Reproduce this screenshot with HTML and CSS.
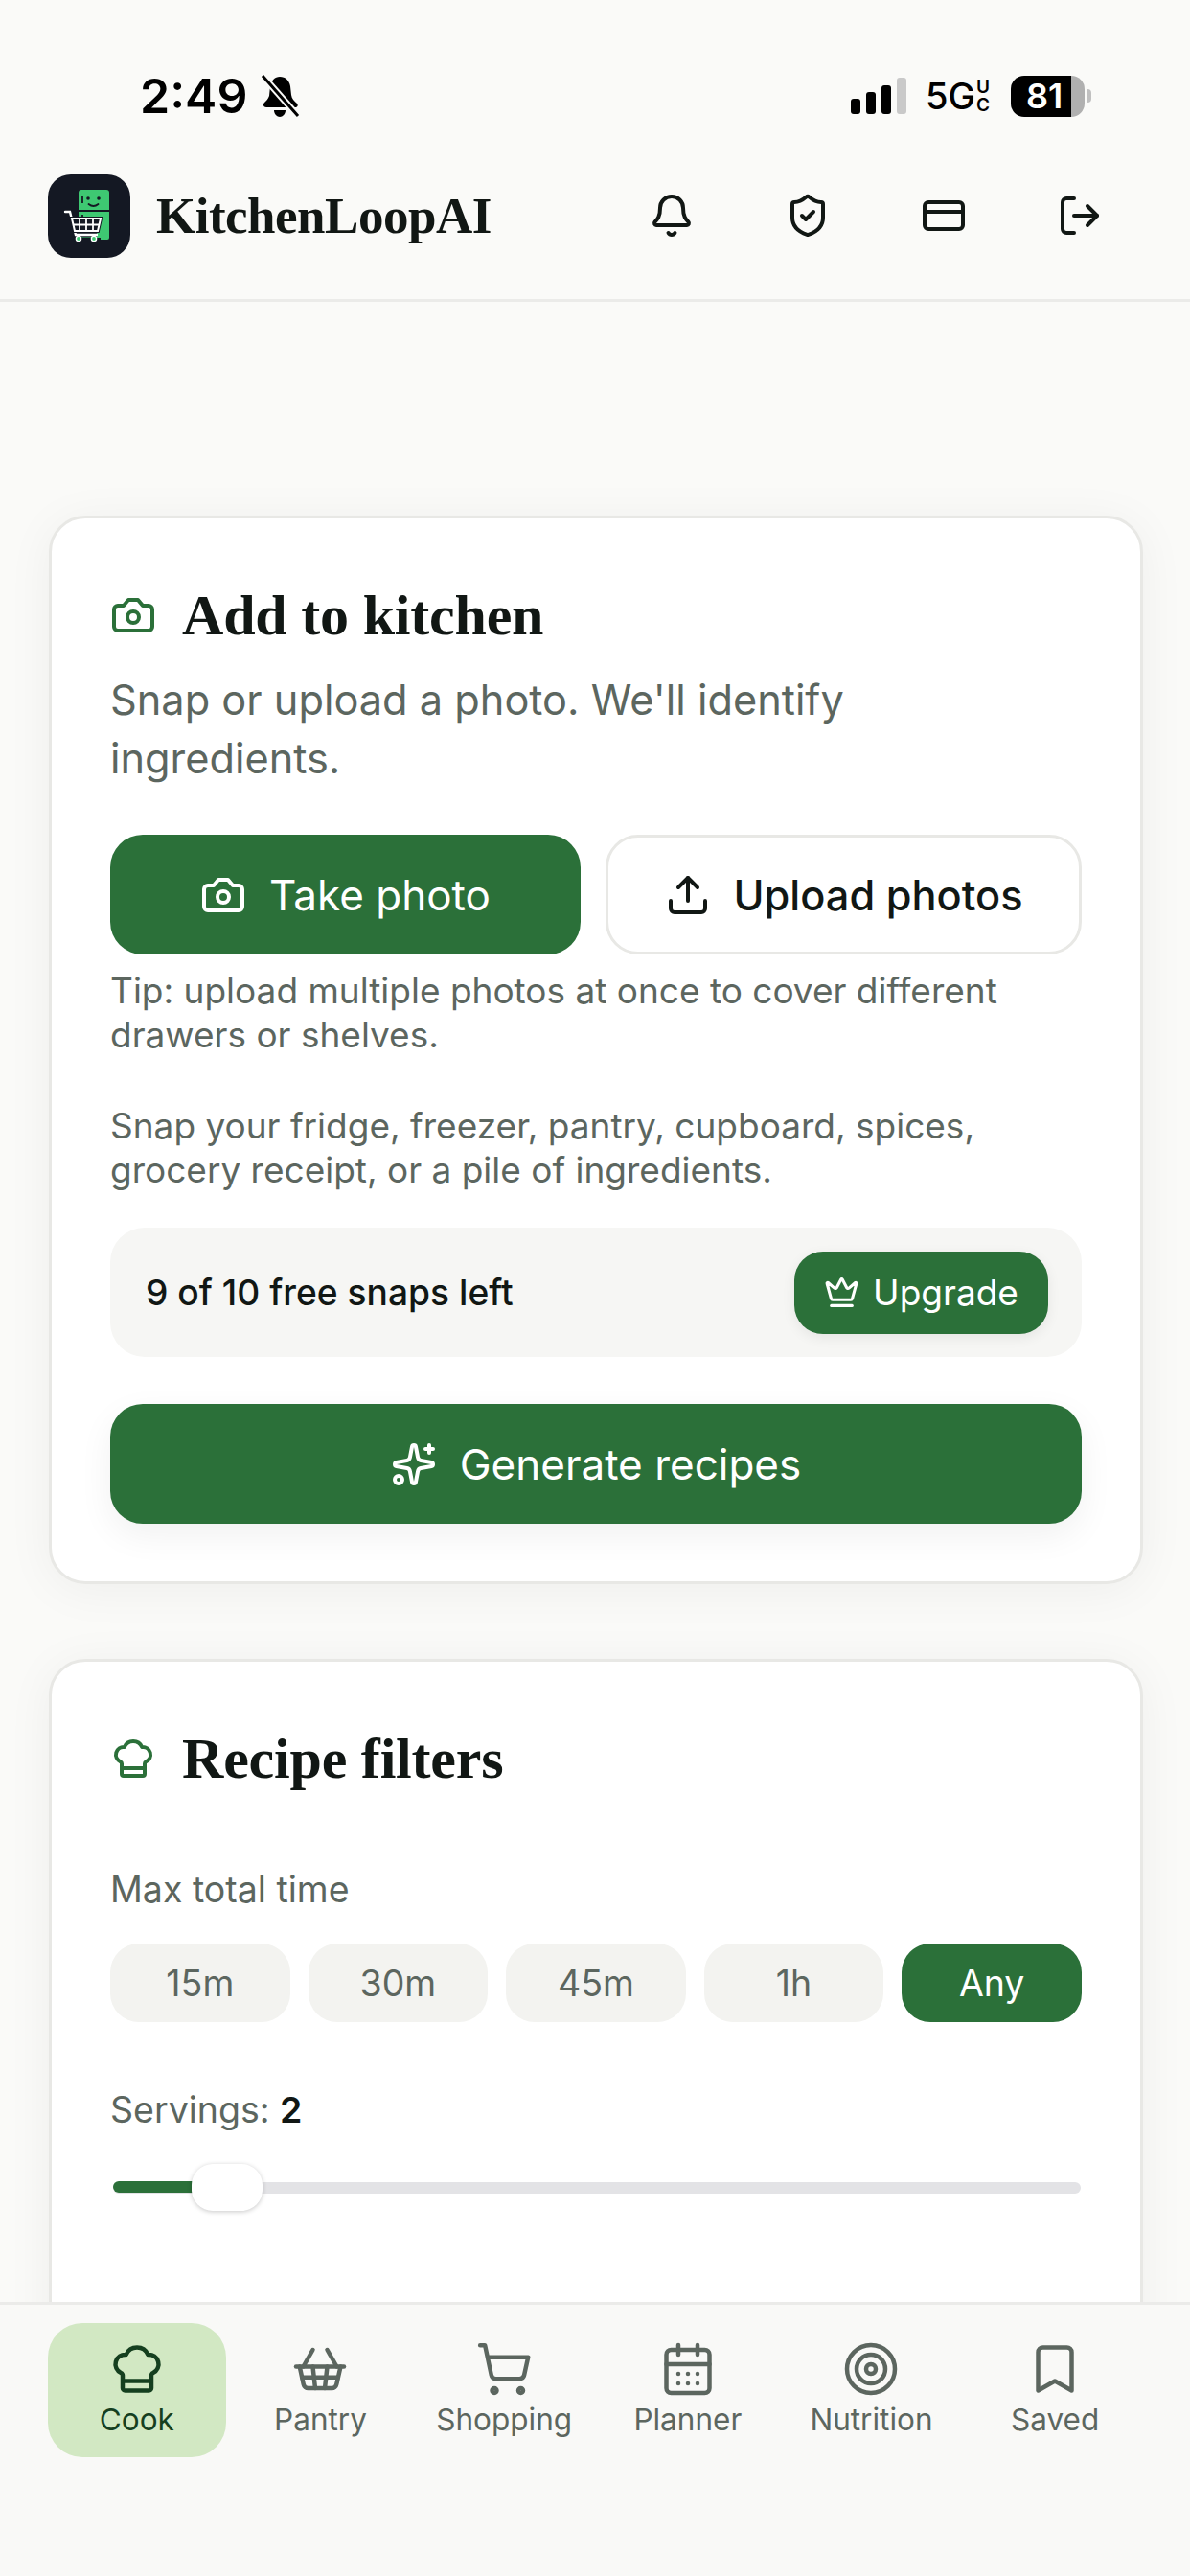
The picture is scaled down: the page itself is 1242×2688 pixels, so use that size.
FILE: index.html
```html
<!DOCTYPE html>
<html lang="en">

<head>
    <meta charset="UTF-8">
    <meta name="viewport" content="width=device-width, initial-scale=1.0">
    <title>KitchenLoopAI</title>
    <link rel="stylesheet" href="styles.css">
</head>

<body>
    <div class="status-bar">
        <div class="status-left">
            <span class="time">2:49</span>
            <svg class="silent" viewBox="0 0 41 45">
                <path d="M20 2c6 0 10 4 11 10l1 9c.5 4 3 6 6 9 1.500 2 .5 4-2 4H6c-3 0-4-3-2-5 2-2 4-4 5-7l1-10c1-6 5-10 10-10z" fill="#000" />
                <path d="M14 37h12c0 4-3 7-6 7s-6-3-6-7z" fill="#000" />
                <path d="M2 1l37 42" stroke="#fafaf8" stroke-width="7" />
                <path d="M2 1l37 42" stroke="#000" stroke-width="3" />
            </svg>
        </div>
        <div class="status-right">
            <div class="signal">
                <span class="bar bar-1"></span>
                <span class="bar bar-2"></span>
                <span class="bar bar-3"></span>
                <span class="bar bar-4"></span>
            </div>
            <div class="network">5G<span class="uc">U<br>C</span></div>
            <div class="battery"><span class="battery-level">81</span></div>
            <span class="battery-nub"></span>
        </div>
    </div>

    <header class="app-header">
        <div class="brand">
            <svg class="logo" viewBox="0 0 86 87">
                <rect width="86" height="87" rx="24" fill="#141823" />
                <path d="M32 19a3 3 0 0 1 3-3h26a3 3 0 0 1 3 3v18H32z" fill="#3ec872" />
                <path d="M32 39h32v27a2 2 0 0 1-2 2h-7v-2H32z" fill="#3ec872" />
                <circle cx="42" cy="25" r="1.800" fill="#141823" />
                <circle cx="53" cy="25" r="1.800" fill="#141823" />
                <path d="M42.500 31q5 4 10 0" fill="none" stroke="#141823" stroke-width="1.800" stroke-linecap="round" />
                <path d="M36 22v8M36 42v4" stroke="#141823" stroke-width="1.800" />
                <path d="M18 39h5l6 24h22" fill="none" stroke="#141823" stroke-width="5" />
                <path d="M18 39h5l6 24h22" fill="none" stroke="#fff" stroke-width="2.400" stroke-linecap="round" />
                <path d="M25 46h30l-3 13H28z" fill="#141823" stroke="#141823" stroke-width="4" />
                <path d="M25 46h30l-3 13H28z" fill="#141823" stroke="#fff" stroke-width="2" />
                <path d="M33 46v13M40 46v13M47 46v13M26.500 52.500h27" stroke="#fff" stroke-width="1.800" />
                <circle cx="32" cy="67" r="2.600" fill="#3ec872" stroke="#fff" stroke-width="1.400" />
                <circle cx="48" cy="67" r="2.600" fill="#3ec872" stroke="#fff" stroke-width="1.400" />
            </svg>
            <span class="brand-name">KitchenLoopAI</span>
        </div>
        <div class="header-icons">
            <svg class="icon" viewBox="0 0 24 24">
                <path d="M10.268 21a2 2 0 0 0 3.464 0" />
                <path d="M3.262 15.326A1 1 0 0 0 4 17h16a1 1 0 0 0 .74-1.673C19.41 13.956 18 12.499 18 8A6 6 0 0 0 6 8c0 4.499-1.411 5.956-2.738 7.326" />
            </svg>
            <svg class="icon" viewBox="0 0 24 24">
                <path d="M20 13c0 5-3.500 7.500-7.660 8.950a1 1 0 0 1-.67-.01C7.500 20.500 4 18 4 13V6a1 1 0 0 1 1-1c2 0 4.500-1.200 6.240-2.720a1.170 1.170 0 0 1 1.520 0C14.510 3.810 17 5 19 5a1 1 0 0 1 1 1z" />
                <path d="m9 12 2 2 4-4" />
            </svg>
            <svg class="icon" viewBox="0 0 24 24">
                <rect x="2" y="5" width="20" height="14" rx="2" />
                <path d="M2 10h20" />
            </svg>
            <svg class="icon" viewBox="0 0 24 24">
                <path d="M9 21H5a2 2 0 0 1-2-2V5a2 2 0 0 1 2-2h4" />
                <path d="m16 17 5-5-5-5" />
                <path d="M21 12H9" />
            </svg>
        </div>
    </header>

    <main class="content">
        <!-- add to kitchen -->
        <section class="card">
            <div class="card-title">
                <svg class="icon icon-green" viewBox="0 0 24 24">
                    <path d="M14.500 4h-5L7 7H4a2 2 0 0 0-2 2v9a2 2 0 0 0 2 2h16a2 2 0 0 0 2-2V9a2 2 0 0 0-2-2h-3l-2.500-3z" />
                    <circle cx="12" cy="13" r="3" />
                </svg>
                <h2>Add to kitchen</h2>
            </div>
            <p class="lead">Snap or upload a photo. We'll identify ingredients.</p>

            <div class="photo-buttons">
                <button class="btn btn-green">
                    <svg class="icon" viewBox="0 0 24 24">
                        <path d="M14.500 4h-5L7 7H4a2 2 0 0 0-2 2v9a2 2 0 0 0 2 2h16a2 2 0 0 0 2-2V9a2 2 0 0 0-2-2h-3l-2.500-3z" />
                        <circle cx="12" cy="13" r="3" />
                    </svg>
                    Take photo
                </button>
                <button class="btn btn-outline">
                    <svg class="icon" viewBox="0 0 24 24">
                        <path d="M21 15v4a2 2 0 0 1-2 2H5a2 2 0 0 1-2-2v-4" />
                        <path d="m17 8-5-5-5 5" />
                        <path d="M12 3v12" />
                    </svg>
                    Upload photos
                </button>
            </div>

            <p class="note">Tip: upload multiple photos at once to cover different drawers or shelves.</p>
            <p class="note note-second">Snap your fridge, freezer, pantry, cupboard, spices, grocery receipt, or a pile of ingredients.</p>

            <div class="snaps">
                <span>9 of 10 free snaps left</span>
                <button class="upgrade">
                    <svg class="icon" viewBox="0 0 24 24">
                        <path d="M11.562 3.266a.5.5 0 0 1 .876 0L15.390 8.870a1 1 0 0 0 1.516.294L21.183 5.500a.5.5 0 0 1 .798.519l-2.834 10.246a1 1 0 0 1-.956.734H5.810a1 1 0 0 1-.957-.734L2.020 6.020a.5.5 0 0 1 .798-.519l4.276 3.664a1 1 0 0 0 1.516-.294z" />
                        <path d="M5 21h14" />
                    </svg>
                    Upgrade
                </button>
            </div>

            <button class="btn btn-green btn-generate">
                <svg class="icon" viewBox="0 0 24 24">
                    <path d="M11.017 2.814a1 1 0 0 1 1.966 0l1.051 5.558a2 2 0 0 0 1.594 1.594l5.558 1.051a1 1 0 0 1 0 1.966l-5.558 1.051a2 2 0 0 0-1.594 1.594l-1.051 5.558a1 1 0 0 1-1.966 0l-1.051-5.558a2 2 0 0 0-1.594-1.594l-5.558-1.051a1 1 0 0 1 0-1.966l5.558-1.051a2 2 0 0 0 1.594-1.594z" />
                    <path d="M20 2v4" />
                    <path d="M22 4h-4" />
                    <circle cx="4" cy="20" r="2" />
                </svg>
                Generate recipes
            </button>
        </section>

        <!-- recipe filters, runs on below the nav -->
        <section class="card card-filters">
            <div class="card-title">
                <svg class="icon icon-green" viewBox="0 0 24 24">
                    <path d="M17 21a1 1 0 0 0 1-1v-5.350c0-.457.316-.844.727-1.041a4 4 0 0 0-2.134-7.589 5 5 0 0 0-9.186 0 4 4 0 0 0-2.134 7.588c.411.198.727.585.727 1.041V20a1 1 0 0 0 1 1Z" />
                    <path d="M6 17h12" />
                </svg>
                <h2>Recipe filters</h2>
            </div>

            <div class="filter-label">Max total time</div>
            <div class="chips">
                <button class="chip">15m</button>
                <button class="chip">30m</button>
                <button class="chip">45m</button>
                <button class="chip">1h</button>
                <button class="chip chip-active">Any</button>
            </div>

            <div class="filter-label servings">Servings: <b>2</b></div>
            <div class="slider">
                <div class="slider-fill"></div>
                <div class="slider-thumb"></div>
            </div>
        </section>
    </main>

    <nav class="bottom-nav">
        <a class="nav-item active">
            <svg class="icon" viewBox="0 0 24 24">
                <path d="M17 21a1 1 0 0 0 1-1v-5.350c0-.457.316-.844.727-1.041a4 4 0 0 0-2.134-7.589 5 5 0 0 0-9.186 0 4 4 0 0 0-2.134 7.588c.411.198.727.585.727 1.041V20a1 1 0 0 0 1 1Z" />
                <path d="M6 17h12" />
            </svg>
            Cook
        </a>
        <a class="nav-item">
            <svg class="icon" viewBox="0 0 24 24">
                <path d="m15 11-1 9" />
                <path d="m19 11-4-7" />
                <path d="M2 11h20" />
                <path d="m3.500 11 1.600 7.400a2 2 0 0 0 2 1.600h9.800a2 2 0 0 0 2-1.600l1.700-7.400" />
                <path d="M4.500 15.500h15" />
                <path d="m5 11 4-7" />
                <path d="m9 11 1 9" />
            </svg>
            Pantry
        </a>
        <a class="nav-item">
            <svg class="icon" viewBox="0 0 24 24">
                <circle cx="8" cy="21" r="1" />
                <circle cx="19" cy="21" r="1" />
                <path d="M2.050 2.050h2l2.660 12.420a2 2 0 0 0 2 1.580h9.780a2 2 0 0 0 1.950-1.570l1.650-7.430H5.120" />
            </svg>
            Shopping
        </a>
        <a class="nav-item">
            <svg class="icon" viewBox="0 0 24 24">
                <path d="M8 2v4" />
                <path d="M16 2v4" />
                <rect x="3" y="4" width="18" height="18" rx="2" />
                <path d="M3 10h18" />
                <path d="M8 14h.01" />
                <path d="M12 14h.01" />
                <path d="M16 14h.01" />
                <path d="M8 18h.01" />
                <path d="M12 18h.01" />
                <path d="M16 18h.01" />
            </svg>
            Planner
        </a>
        <a class="nav-item">
            <svg class="icon" viewBox="0 0 24 24">
                <circle cx="12" cy="12" r="10" />
                <circle cx="12" cy="12" r="6" />
                <circle cx="12" cy="12" r="2" />
            </svg>
            Nutrition
        </a>
        <a class="nav-item">
            <svg class="icon" viewBox="0 0 24 24">
                <path d="m19 21-7-4-7 4V5a2 2 0 0 1 2-2h10a2 2 0 0 1 2 2v16z" />
            </svg>
            Saved
        </a>
    </nav>
</body>

</html>
```

FILE: styles.css
```css
* {
    box-sizing: border-box;
}

html,
body {
    margin: 0;
    height: 2688px;
    overflow: hidden;
}

body {
    position: relative;
    font-family: Inter, "Liberation Sans", sans-serif;
    background-color: #fafaf8;
    color: #111714;
}

button {
    font-family: inherit;
    border: none;
    cursor: pointer;
}

.icon {
    width: 48px;
    height: 48px;
    fill: none;
    stroke: currentColor;
    stroke-width: 2;
    stroke-linecap: round;
    stroke-linejoin: round;
    flex-shrink: 0;
}

.icon-green {
    color: #2b7039;
}

/* status bar */
.status-bar {
    height: 130px;
    padding: 75px 103px 0 146px;
    display: flex;
    justify-content: space-between;
    align-items: flex-start;
    color: #000;
}

.status-left {
    display: flex;
    align-items: center;
    gap: 14px;
}

.time {
    font-size: 50px;
    font-weight: 600;
    line-height: 50px;
}

.silent {
    width: 41px;
    height: 45px;
}

.status-right {
    display: flex;
    align-items: center;
    height: 50px;
}

.signal {
    display: flex;
    align-items: flex-end;
    gap: 6px;
    height: 38px;
    margin-right: 20px;
}

.bar {
    width: 10px;
    background-color: #000;
    border-radius: 3px;
}

.bar-1 {
    height: 16px;
}

.bar-2 {
    height: 23px;
}

.bar-3 {
    height: 30px;
}

.bar-4 {
    height: 38px;
    background-color: #c9c9c9;
}

.network {
    display: flex;
    align-items: center;
    font-size: 38px;
    font-weight: 500;
    line-height: 38px;
    margin-right: 22px;
}

.uc {
    font-size: 19px;
    line-height: 19px;
    font-weight: 600;
    margin-left: 1px;
}

.battery {
    width: 77px;
    height: 43px;
    border-radius: 14px;
    background: linear-gradient(to right, #000 82%, #b0b0b0 82%);
    color: #fff;
    font-size: 36px;
    font-weight: 600;
    line-height: 43px;
    padding-left: 16px;
}

.battery-nub {
    width: 4px;
    height: 14px;
    margin-left: 3px;
    background-color: #c0c0c0;
    border-radius: 0 4px 4px 0;
}

/* header */
.app-header {
    height: 185px;
    padding: 8px 91px 0 50px;
    display: flex;
    justify-content: space-between;
    align-items: center;
    border-bottom: 3px solid #ebebe9;
}

.brand {
    display: flex;
    align-items: center;
    gap: 27px;
}

.logo {
    width: 86px;
    height: 87px;
}

.brand-name {
    font-family: "Liberation Serif", serif;
    font-size: 53px;
    font-weight: 700;
    letter-spacing: -0.5px;
}

.header-icons {
    display: flex;
    gap: 94px;
}

/* cards */
.content {
    padding: 223px 49px 0 51px;
    display: flex;
    flex-direction: column;
    gap: 78px;
}

.card {
    background-color: #fff;
    border: 3px solid #e8e8e5;
    border-radius: 38px;
    padding: 67px 61px 60px;
    box-shadow: 0 6px 50px rgba(0, 0, 0, 0.05);
}

.card-filters {
    padding-bottom: 200px;
}

.card-title {
    display: flex;
    align-items: center;
    gap: 27px;
}

.card-title h2 {
    margin: 0;
    font-family: "Liberation Serif", serif;
    font-size: 60px;
    line-height: 68px;
    font-weight: 700;
    letter-spacing: -0.2px;
}

.lead {
    margin: 24px 0 0;
    font-size: 43.3px;
    line-height: 61px;
    color: #5c665f;
}

.photo-buttons {
    display: flex;
    gap: 26px;
    margin-top: 49px;
}

.btn {
    flex: 1;
    height: 125px;
    border-radius: 34px;
    font-size: 43.3px;
    font-weight: 500;
    display: flex;
    justify-content: center;
    align-items: center;
    gap: 24px;
}

.btn-green {
    background-color: #2b7039;
    color: #fff;
    font-weight: 400;
    font-size: 44px;
}

.btn-outline {
    background-color: #fff;
    color: #111714;
    border: 3px solid #e8e8e5;
}

.note {
    margin: 15px 0 0;
    font-size: 37px;
    line-height: 46px;
    color: #5c665f;
}

.note-second {
    margin-top: 49px;
}

.snaps {
    margin-top: 37px;
    height: 135px;
    padding: 0 35px 0 37px;
    background-color: #f6f6f4;
    border-radius: 36px;
    display: flex;
    justify-content: space-between;
    align-items: center;
    font-size: 37.2px;
    font-weight: 500;
}

.upgrade {
    width: 265px;
    height: 86px;
    border-radius: 30px;
    background-color: #2b7039;
    color: #fff;
    font-size: 37px;
    font-weight: 400;
    display: flex;
    justify-content: center;
    align-items: center;
    gap: 14px;
    box-shadow: 0 4px 14px rgba(0, 0, 0, 0.07);
}

.upgrade .icon {
    width: 37px;
    height: 37px;
}

.btn-generate {
    width: 100%;
    margin-top: 49px;
    box-shadow: 0 12px 36px rgba(0, 0, 0, 0.06);
}

/* filters */
.filter-label {
    margin-top: 80px;
    font-size: 37.5px;
    line-height: 46px;
    color: #5c665f;
}

.chips {
    display: flex;
    gap: 19px;
    margin-top: 33px;
}

.chip {
    flex: 1;
    height: 82px;
    border-radius: 30px;
    background-color: #f3f3f0;
    color: #5c665f;
    font-size: 37.5px;
}

.chip-active {
    background-color: #2b7039;
    color: #fff;
}

.servings {
    margin-top: 69px;
}

.servings b {
    font-weight: 600;
    color: #111714;
}

.slider {
    position: relative;
    height: 49px;
    margin: 33px 1px 0 3px;
    display: flex;
    align-items: center;
}

.slider::before {
    content: "";
    flex: 1;
    height: 12px;
    background-color: #e3e3e6;
    border-radius: 6px;
}

.slider-fill {
    position: absolute;
    left: 0;
    top: 18px;
    width: 90px;
    height: 12px;
    background-color: #2b7039;
    border-radius: 6px 0 0 6px;
}

.slider-thumb {
    position: absolute;
    left: 82px;
    top: 0;
    width: 74px;
    height: 49px;
    background-color: #fff;
    border-radius: 22px;
    box-shadow: 0 1px 5px rgba(0, 0, 0, 0.22);
}

/* bottom nav */
.bottom-nav {
    position: absolute;
    left: 0;
    right: 0;
    bottom: 0;
    height: 286px;
    padding: 19px 48px 0 50px;
    background-color: #f9f9f7;
    border-top: 3px solid #ebebe9;
    display: grid;
    grid-template-columns: repeat(6, 1fr);
    column-gap: 6px;
    align-items: start;
}

.nav-item {
    height: 140px;
    border-radius: 36px;
    display: flex;
    flex-direction: column;
    align-items: center;
    justify-content: flex-end;
    padding-bottom: 20px;
    font-size: 31.5px;
    line-height: 38px;
    color: #5c665f;
    white-space: nowrap;
    gap: 4px;
}

.nav-item .icon {
    width: 60px;
    height: 60px;
    stroke-width: 1.8;
}

.nav-item.active {
    background-color: #d2e8c3;
    color: #153f1f;
}
```
